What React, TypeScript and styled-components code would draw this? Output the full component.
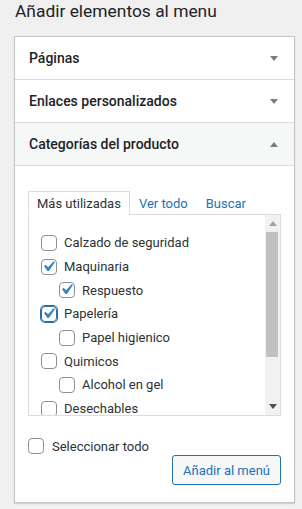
import React from "react";
import styled, { createGlobalStyle } from "styled-components";

const FONT = `Roboto, "Noto Sans", Arial, sans-serif`;

type Cat = { label: string; checked?: boolean; focused?: boolean; child?: boolean };

const categories: Cat[] = [
  { label: "Calzado de seguridad" },
  { label: "Maquinaria", checked: true },
  { label: "Respuesto", checked: true, child: true },
  { label: "Papelería", checked: true, focused: true },
  { label: "Papel higienico", child: true },
  { label: "Quimicos" },
  { label: "Alcohol en gel", child: true },
  { label: "Desechables" },
];

const sections = [
  { title: "Páginas", open: false },
  { title: "Enlaces personalizados", open: false },
  { title: "Categorías del producto", open: true },
];

const Check: React.FC<{ checked?: boolean; focused?: boolean }> = ({ checked, focused }) => (
  <Box $focused={focused}>
    {checked && (
      <svg width="21" height="21" viewBox="0 0 20 20">
        <path d="M14.83 4.89l1.34.94-5.81 8.38H9.02L5.78 9.67l1.34-1.25 2.57 2.4z" fill="#3582c4" />
      </svg>
    )}
  </Box>
);

const Triangle: React.FC<{ up?: boolean; color: string }> = ({ up, color }) => (
  <svg width="8" height="5" viewBox="0 0 8 5">
    <path d={up ? "M0 5 L4 0 L8 5 Z" : "M0 0 L8 0 L4 5 Z"} fill={color} />
  </svg>
);

const App: React.FC = () => {
  return (
    <Page>
      <GlobalStyle />
      <Title>Añadir elementos al menu</Title>
      <Panel>
        {sections.map((s) => (
          <Section key={s.title}>
            <SectionHeader $open={s.open}>
              <span>{s.title}</span>
              <Triangle up={s.open} color="#787c82" />
            </SectionHeader>
            {s.open && (
              <SectionBody>
                <Tabs>
                  <Tab $active>Más utilizadas</Tab>
                  <Tab>Ver todo</Tab>
                  <Tab>Buscar</Tab>
                </Tabs>
                <TabPanel>
                  <CheckList>
                    {categories.map((c) => (
                      <CheckItem key={c.label} $child={c.child}>
                        <Check checked={c.checked} focused={c.focused} />
                        <span>{c.label}</span>
                      </CheckItem>
                    ))}
                  </CheckList>
                  <ScrollTrack>
                    <ScrollButton>
                      <Triangle up color="#a3a3a3" />
                    </ScrollButton>
                    <ScrollThumb />
                    <ScrollSpacer />
                    <ScrollButton>
                      <Triangle color="#505050" />
                    </ScrollButton>
                  </ScrollTrack>
                </TabPanel>
                <SelectAll>
                  <Check />
                  <span>Seleccionar todo</span>
                </SelectAll>
                <Actions>
                  <Button>Añadir al menú</Button>
                </Actions>
              </SectionBody>
            )}
          </Section>
        ))}
      </Panel>
    </Page>
  );
};

const GlobalStyle = createGlobalStyle`
  html, body {
    margin: 0;
    padding: 0;
    background: #f0f0f1;
  }
  body {
    font-family: ${FONT};
    font-size: 13px;
    color: #2c3338;
  }
`;

const Page = styled.div`
  width: 302px;
  height: 509px;
  overflow: hidden;
`;

const Title = styled.h2`
  margin: 0;
  padding: 0 0 0 15px;
  font-size: 17.4px;
  font-weight: 400;
  line-height: 22px;
  color: #1d2327;
`;

const Panel = styled.div`
  margin: 14px 0 0 14px;
  width: 281px;
  box-sizing: border-box;
  background: #fff;
  border: 1px solid #c3c4c7;
  box-shadow: 0 1px 1px rgba(0, 0, 0, 0.12);
`;

const Section = styled.div`
  border-bottom: 1px solid #dcdcde;
  &:last-child {
    border-bottom: none;
  }
`;

const SectionHeader = styled.div<{ $open?: boolean }>`
  height: 42px;
  display: flex;
  align-items: center;
  justify-content: space-between;
  padding: 0 16px 0 14px;
  font-size: 14px;
  font-weight: 500;
  color: #1d2327;
  background: ${(p) => (p.$open ? "#f6f7f7" : "#fff")};
  border-bottom: ${(p) => (p.$open ? "1px solid #dcdcde" : "none")};
`;

const SectionBody = styled.div`
  padding: 25px 13px 17px 13px;
`;

const Tabs = styled.div`
  display: flex;
  height: 24px;
  position: relative;
  z-index: 1;
  margin-bottom: -1px;
`;

const Tab = styled.div<{ $active?: boolean }>`
  box-sizing: border-box;
  height: 25px;
  padding: 0 8px;
  display: flex;
  align-items: center;
  border: 1px solid ${(p) => (p.$active ? "#dcdcde" : "transparent")};
  border-bottom-color: ${(p) => (p.$active ? "#fff" : "transparent")};
  background: ${(p) => (p.$active ? "#fff" : "transparent")};
  color: ${(p) => (p.$active ? "#2c3338" : "#2271b1")};
`;

const TabPanel = styled.div`
  display: flex;
  height: 200px;
  border: 1px solid #dcdcde;
  background: #fff;
`;

const CheckList = styled.div`
  flex: 1;
  overflow: hidden;
  padding: 16px 0 0 12px;
`;

const CheckItem = styled.div<{ $child?: boolean }>`
  display: flex;
  align-items: center;
  gap: 7px;
  height: 23.7px;
  padding-left: ${(p) => (p.$child ? "18px" : "0")};
  white-space: nowrap;
`;

const Box = styled.span<{ $focused?: boolean }>`
  box-sizing: border-box;
  flex: none;
  width: 16px;
  height: 16px;
  border-radius: 4px;
  border: 1px solid ${(p) => (p.$focused ? "#2271b1" : "#8c8f94")};
  box-shadow: ${(p) => (p.$focused ? "0 0 0 1px #2271b1" : "none")};
  display: flex;
  align-items: center;
  justify-content: center;
  overflow: visible;
  svg {
    flex: none;
    margin: -1px 0 0 -1px;
  }
`;

const ScrollTrack = styled.div`
  width: 15px;
  flex: none;
  background: #f1f1f1;
  display: flex;
  flex-direction: column;
`;

const ScrollButton = styled.div`
  height: 17px;
  display: flex;
  align-items: center;
  justify-content: center;
`;

const ScrollThumb = styled.div`
  height: 125px;
  margin: 0 2px 0 1px;
  background: #c1c1c1;
`;

const ScrollSpacer = styled.div`
  flex: 1;
`;

const SelectAll = styled.div`
  display: flex;
  align-items: center;
  gap: 8px;
  margin-top: 22px;
  height: 16px;
`;

const Actions = styled.div`
  display: flex;
  justify-content: flex-end;
  margin-top: 1px;
`;

const Button = styled.button`
  box-sizing: border-box;
  height: 30px;
  padding: 0 10px;
  font-family: ${FONT};
  font-size: 13px;
  color: #2271b1;
  background: #f6f7f7;
  border: 1px solid #2271b1;
  border-radius: 3px;
  cursor: pointer;
`;

export default App;
